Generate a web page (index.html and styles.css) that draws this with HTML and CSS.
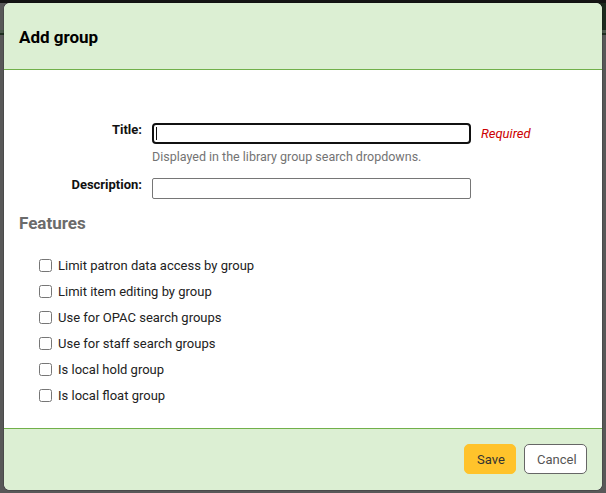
FILE: index.html
```html
<!DOCTYPE html>
<html lang="en">
<head>
<meta charset="utf-8">
<title>Add group</title>
<link rel="stylesheet" href="styles.css">
</head>
<body>
<div class="page">
  <div class="page-top"></div>
  <div class="page-nav"></div>
</div>
<div class="modal">
  <div class="modal-header">
    <h3 class="modal-title">Add group</h3>
  </div>
  <div class="modal-body">
    <div class="form-row">
      <label class="field-label" for="title">Title:</label>
      <input class="text-input focused" id="title" type="text">
      <span class="required">Required</span>
    </div>
    <div class="hint">Displayed in the library group search dropdowns.</div>
    <div class="form-row desc-row">
      <label class="field-label" for="description">Description:</label>
      <input class="text-input" id="description" type="text">
    </div>
    <h4 class="features-title">Features</h4>
    <ul class="features">
      <li><label><input type="checkbox"> Limit patron data access by group</label></li>
      <li><label><input type="checkbox"> Limit item editing by group</label></li>
      <li><label><input type="checkbox"> Use for OPAC search groups</label></li>
      <li><label><input type="checkbox"> Use for staff search groups</label></li>
      <li><label><input type="checkbox"> Is local hold group</label></li>
      <li><label><input type="checkbox"> Is local float group</label></li>
    </ul>
  </div>
  <div class="modal-footer">
    <button class="btn btn-save" type="button">Save</button>
    <button class="btn btn-cancel" type="button">Cancel</button>
  </div>
</div>
</body>
</html>
```
FILE: styles.css
```css
html, body {
  margin: 0;
  padding: 0;
  height: 100%;
}
body {
  background: #585858;
  font-family: Roboto, "Liberation Sans", Arial, sans-serif;
  font-size: 13px;
  color: #222;
  overflow: hidden;
}
.page-top {
  height: 3px;
  background: #141414;
}
.page-nav {
  height: 27px;
  background: linear-gradient(to right, #585858 0, #585858 50%, #1d2b1e 50%, #1d2b1e 100%);
  border-bottom: 3px solid #4a584b;
  box-shadow: 0 2px 0 #1f2f20;
}
.modal {
  position: absolute;
  left: 4px;
  top: 3px;
  width: 598px;
  height: 487px;
  box-sizing: border-box;
  background: #fff;
  border-radius: 6px;
  overflow: hidden;
  display: flex;
  flex-direction: column;
  box-shadow: 0 0 0 1px rgba(0,0,0,0.15);
}
.modal-header {
  background: #dcefd3;
  border-bottom: 1px solid #71b04a;
  padding: 25px 15px 23px;
}
.modal-title {
  margin: 0;
  font-size: 17px;
  line-height: 18px;
  font-weight: 700;
  color: #000;
}
.modal-body {
  flex: 1;
  padding: 53px 15px 0;
}
.form-row {
  display: flex;
  align-items: center;
  height: 21px;
}
.field-label {
  width: 123px;
  margin-right: 10px;
  text-align: right;
  font-weight: 700;
  font-size: 13px;
  line-height: 14px;
  align-self: flex-start;
  color: #111;
}
.text-input {
  box-sizing: border-box;
  width: 319px;
  height: 21px;
  margin: 0;
  padding: 1px 4px;
  border: 1px solid #767676;
  border-radius: 2px;
  background: #fff;
  font: inherit;
}
.text-input.focused {
  border: 2px solid #111;
  border-radius: 4px;
  background-image: linear-gradient(#111, #111);
  background-repeat: no-repeat;
  background-position: 2px center;
  background-size: 1px 13px;
}
.required {
  margin-left: 10px;
  color: #cc0000;
  font-style: italic;
  font-size: 13px;
}
.hint {
  margin: 6px 0 0 133px;
  font-size: 12.5px;
  line-height: 14px;
  color: #737373;
}
.desc-row {
  margin-top: 14px;
}
.features-title {
  margin: 14px 0 0;
  font-size: 17px;
  line-height: 20px;
  font-weight: 700;
  color: #6b6b6b;
}
.features {
  list-style: none;
  margin: 19px 0 0;
  padding: 0 0 0 20px;
}
.features li {
  height: 26px;
  display: flex;
  align-items: center;
}
.features label {
  display: flex;
  align-items: center;
  gap: 2px;
  font-size: 13px;
  color: #222;
}
.features input {
  width: 13px;
  height: 13px;
  margin: 0 4px 0 0;
}
.modal-footer {
  background: #dcefd3;
  border-top: 1px solid #71b04a;
  padding: 15px 15px 16px;
  display: flex;
  justify-content: flex-end;
  gap: 8px;
}
.btn {
  box-sizing: border-box;
  height: 30px;
  border-radius: 5px;
  font-family: inherit;
  font-size: 13px;
  padding: 0 12px;
  cursor: pointer;
}
.btn-save {
  width: 52px;
  background: #ffc32b;
  border: 1px solid #ffc32b;
  color: #333;
}
.btn-cancel {
  width: 63px;
  background: #fff;
  border: 1px solid #666;
  color: #555;
}
```
